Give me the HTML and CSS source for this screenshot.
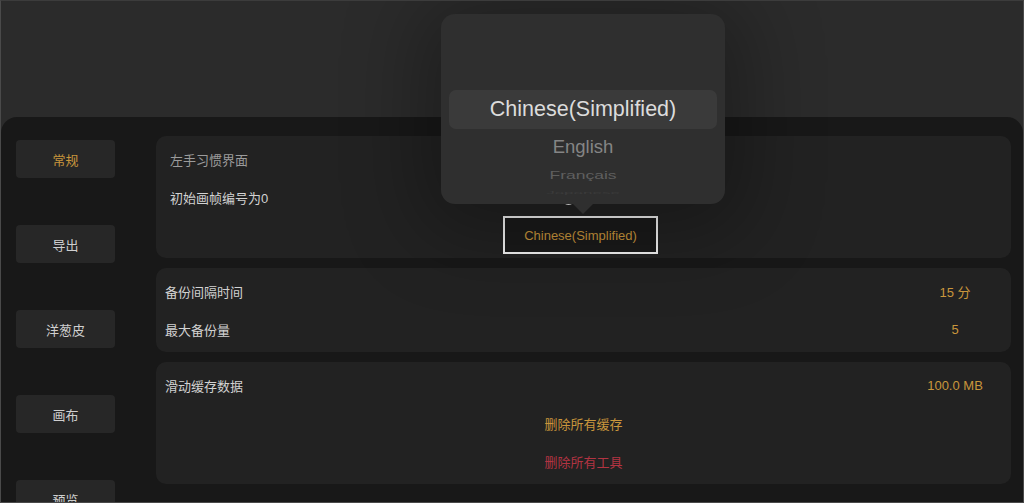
FILE: index.html
```html
<!DOCTYPE html>
<html lang="zh-CN">
<head>
  <meta charset="UTF-8" />
  <meta name="viewport" content="width=device-width, initial-scale=1.0"/>
  <title>设置</title>
  <link rel="stylesheet" href="styles.css">
</head>
<body>
  <div class="window">
    <div class="top-area"></div>

    <div class="panel">
      <nav class="sidebar">
        <div class="tab active">常规</div>
        <div class="tab">导出</div>
        <div class="tab">洋葱皮</div>
        <div class="tab">画布</div>
        <div class="tab">预览</div>
      </nav>

      <main class="content">
        <section class="card card-first">
          <div class="row"><span class="label dim">左手习惯界面</span></div>
          <div class="row">
            <span class="label">初始画帧编号为0</span>
            <span class="knob"></span>
          </div>
          <div class="row row-center">
            <div class="select-box">Chinese(Simplified)</div>
          </div>
        </section>

        <section class="card">
          <div class="row">
            <span class="label">备份间隔时间</span>
            <span class="value">15 分</span>
          </div>
          <div class="row">
            <span class="label">最大备份量</span>
            <span class="value">5</span>
          </div>
        </section>

        <section class="card">
          <div class="row">
            <span class="label">滑动缓存数据</span>
            <span class="value">100.0 MB</span>
          </div>
          <div class="row row-center"><span class="action">删除所有缓存</span></div>
          <div class="row row-center"><span class="action danger">删除所有工具</span></div>
        </section>
      </main>
    </div>

    <div class="popover">
      <div class="wheel">
        <div class="option selected">Chinese(Simplified)</div>
        <div class="option second">English</div>
        <div class="option third">Français</div>
        <div class="option fourth">Japanese</div>
      </div>
    </div>
  </div>
</body>
</html>
```

FILE: styles.css
```css
* {
  box-sizing: border-box;
}

body {
  margin: 0;
  padding: 0;
  background: #2b2b2b;
  font-family: "Liberation Sans", "Noto Sans CJK SC", sans-serif;
}

.window {
  position: relative;
  width: 1024px;
  height: 503px;
  border: 1px solid #4a4a4a;
  border-top-color: #3c3c3c;
  background: #2b2b2b;
  display: flex;
  flex-direction: column;
  overflow: hidden;
}

.top-area {
  height: 116px;
  flex-shrink: 0;
}

.panel {
  flex: 1;
  display: flex;
  background: #181818;
  border-radius: 16px 16px 0 0;
  padding-top: 19px;
}

.sidebar {
  width: 155px;
  flex-shrink: 0;
  padding: 4px 0 0 15px;
  display: flex;
  flex-direction: column;
  gap: 47px;
}

.tab {
  width: 99px;
  height: 38px;
  flex-shrink: 0;
  background: #272727;
  border-radius: 4px;
  color: #cfcfcf;
  font-size: 13px;
  display: flex;
  align-items: center;
  justify-content: center;
}

.tab.active {
  color: #c9963c;
}

.content {
  flex: 1;
  padding-right: 12px;
  display: flex;
  flex-direction: column;
  gap: 10px;
}

.card {
  background: #222222;
  border-radius: 10px;
  padding: 4px 0;
}

.row {
  position: relative;
  height: 38px;
  display: grid;
  grid-template-columns: 1fr 90px;
  align-items: center;
  padding: 0 11px 0 9px;
}

.card-first .row {
  padding-left: 14px;
}

.row-center {
  display: flex;
  justify-content: center;
  padding: 0;
}

.card-first .row-center {
  padding-left: 0;
}

.label {
  color: #d2d2d2;
  font-size: 13px;
}

.label.dim {
  color: #9b9b9b;
}

.value {
  color: #c9963c;
  font-size: 13px;
  text-align: center;
}

.action {
  color: #c9963c;
  font-size: 13px;
}

.action.danger {
  color: #b23442;
}

.knob {
  position: absolute;
  left: 406px;
  top: 14px;
  width: 13px;
  height: 13px;
  border-radius: 50%;
  background: #f2f2f2;
}

.select-box {
  width: 155px;
  height: 38px;
  margin-right: 6px;
  border: 2px solid #f4f4f4;
  background: #1a1a1a;
  color: #c9963c;
  font-size: 13px;
  display: flex;
  align-items: center;
  justify-content: center;
}

/* language picker over the panel */
.popover {
  position: absolute;
  left: 440px;
  top: 13px;
  width: 284px;
  height: 190px;
  background: #2f2f2f;
  border-radius: 14px;
  box-shadow: 0 10px 80px 20px rgba(0, 0, 0, 0.3);
}

.popover::after {
  content: "";
  position: absolute;
  left: 132px;
  bottom: -10px;
  border-left: 10px solid transparent;
  border-right: 10px solid transparent;
  border-top: 10px solid #2f2f2f;
}

.wheel {
  height: 100%;
  overflow: hidden;
  border-radius: 14px;
  padding: 76px 8px 0;
  display: flex;
  flex-direction: column;
  align-items: center;
}

.option {
  width: 100%;
  text-align: center;
  flex-shrink: 0;
}

.option.selected {
  height: 39px;
  line-height: 39px;
  background: #3a3a3a;
  border-radius: 7px;
  color: #dcdcdc;
  font-size: 21.5px;
}

.option.second {
  height: 36px;
  line-height: 36px;
  color: #858585;
  font-size: 18.5px;
}

.option.third {
  height: 20px;
  line-height: 20px;
  color: #5f5f5f;
  font-size: 17.5px;
  transform: scaleY(0.62);
}

.option.fourth {
  height: 12px;
  line-height: 12px;
  color: #3b3b3b;
  font-size: 17px;
  transform: scaleY(0.25);
  margin-top: 2px;
}
```
